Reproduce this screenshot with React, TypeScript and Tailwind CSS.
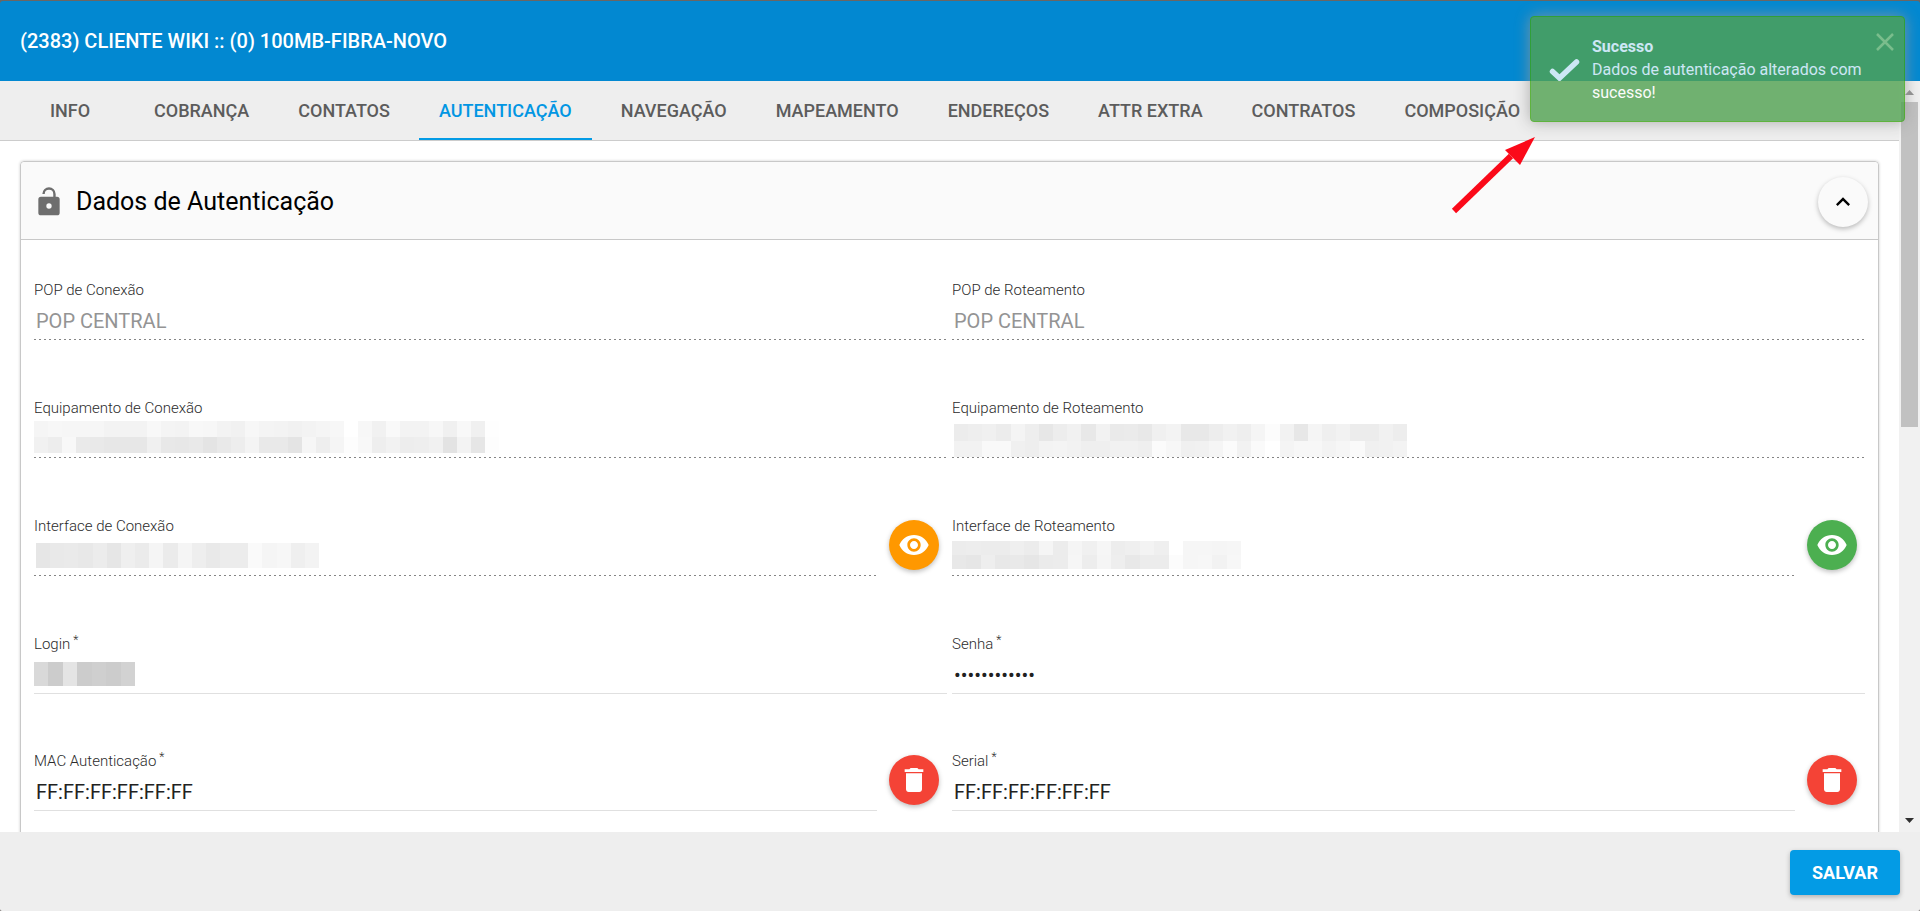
import { useState } from "react";
import type { ReactNode } from "react";
import { MdDelete, MdKeyboardArrowUp, MdRemoveRedEye } from "react-icons/md";

const tabs = [
  "INFO",
  "COBRANÇA",
  "CONTATOS",
  "AUTENTICAÇÃO",
  "NAVEGAÇÃO",
  "MAPEAMENTO",
  "ENDEREÇOS",
  "ATTR EXTRA",
  "CONTRATOS",
  "COMPOSIÇÃO",
];

/** Pixelated mask drawn over a redacted value; one shade list per row of blocks. */
function Mosaic({ rows, width, heights }: { rows: string[][]; width: number; heights: number[] }) {
  const cell = width / rows[0].length;
  const height = heights.reduce((a, b) => a + b, 0);
  let y = 0;
  return (
    <svg width={width} height={height} shapeRendering="crispEdges" aria-hidden="true">
      {rows.map((row, r) => {
        const top = y;
        y += heights[r];
        return row.map((shade, c) => {
          const x = Math.round(c * cell);
          return (
            <rect
              key={r + "-" + c}
              x={x}
              y={top}
              width={Math.round((c + 1) * cell) - x}
              height={heights[r]}
              fill={"#" + shade.repeat(3)}
            />
          );
        });
      })}
    </svg>
  );
}

function OpenLock() {
  return (
    <svg viewBox="0 0 24 24" className="size-8 text-[#6e6e6e]" fill="currentColor" aria-hidden="true">
      <path d="M12 17a2 2 0 0 0 2-2 2 2 0 0 0-2-2 2 2 0 0 0-2 2 2 2 0 0 0 2 2M18 8a2 2 0 0 1 2 2v10a2 2 0 0 1-2 2H6a2 2 0 0 1-2-2V10a2 2 0 0 1 2-2h9.200V6A3.200 3.200 0 0 0 12 2.900 3.200 3.200 0 0 0 8.800 6H7a5 5 0 0 1 5-5 5 5 0 0 1 5 5v2h1z" />
    </svg>
  );
}

const s = (text: string) => text.split(" ");

const masks = {
  equipConexao: [
    s("f5 f7 f6 f6 f6 f3 f3 f3 f8 f4 f3 f8 f7 f3 f1 f7 f4 f3 f1 f3 f5 f7 ff f7 f1 f9 f3 f3 f7 f0 f8 f0 fe"),
    s("f1 ed f8 ea e9 e7 e7 e7 f0 e8 e7 e9 e4 e9 ed f4 e9 e9 e4 f6 ee f5 fd f8 ee f2 ed ee f1 e3 f3 e6 fd"),
  ],
  equipRoteamento: [
    s("ec ee f0 ec f4 ee e7 ed f1 e8 f2 ea eb e8 f0 f3 e8 e8 ed f1 ee f5 fc f2 e7 f5 ef f2 ec ec f1 ed"),
    s("f2 f2 f9 f9 f0 ee f3 f4 f2 ef ef f1 f1 ef fb f7 f0 f1 f5 fb f2 fa ff f4 f7 f7 f3 f6 fa f0 f1 f3"),
  ],
  ifConexao: [s("e6 e9 ea e8 ec e6 ef eb f5 eb f5 ee e9 ec ec fa f5 f7 ef f3")],
  ifRoteamento: [
    s("ec ed ec ec ef ec f5 ec f5 f0 f6 ed ef f3 ef ff f6 f6 f5 f6"),
    s("e8 e6 ee e8 e9 e6 eb ec f6 ed f5 ee e8 ec ec fc f6 f7 f2 f7"),
  ],
  login: [s("d9 cc e4 cc cf cc d2")],
};

type FieldProps = {
  id: string;
  label: string;
  value?: string;
  type?: string;
  required?: boolean;
  disabled?: boolean;
  mask?: ReactNode;
  action?: ReactNode;
};

function Field({ id, label, value = "", type = "text", required, disabled, mask, action }: FieldProps) {
  const [text, setText] = useState(value);
  return (
    <div className={disabled ? "flex h-[118px] items-start" : "flex h-[117px] items-start"}>
      <div className="min-w-0 flex-1">
        <label htmlFor={id} className="block h-5 text-[15px] leading-5 font-light text-[#2b2b2b]">
          {label}
          {required && <sup className="top-[-5px] ml-[3px] text-[12px] leading-none">*</sup>}
        </label>
        <div
          className={
            disabled
              ? "relative h-10 bg-[repeating-linear-gradient(90deg,#858585_0_2px,transparent_2px_5px)] bg-[length:100%_1px] bg-bottom bg-no-repeat"
              : "relative h-10 border-b border-[#e0e0e0]"
          }
        >
          <input
            id={id}
            type={type}
            value={text}
            disabled={disabled}
            onChange={(e) => setText(e.target.value)}
            className="h-full w-full bg-transparent px-[2px] pt-[2px] text-[20px] text-[#212121] outline-none disabled:text-[#949494]"
          />
          {mask}
        </div>
      </div>
      {action}
    </div>
  );
}

function RoundButton({ label, color, children }: { label: string; color: string; children: ReactNode }) {
  return (
    <button
      type="button"
      aria-label={label}
      className={"mt-1 mr-2 ml-3 flex size-[50px] shrink-0 items-center justify-center rounded-full text-white shadow-[0_2px_5px_rgba(0,0,0,0.26)] " + color}
    >
      {children}
    </button>
  );
}

export default function App() {
  const [open, setOpen] = useState(true);
  const [toast, setToast] = useState(true);
  return (
    <div className="relative flex h-screen flex-col overflow-hidden bg-[#6b6663] pt-px font-[Roboto,sans-serif]">
      <header className="flex h-20 shrink-0 items-center rounded-t-[3px] bg-[#0288d1] px-5">
        <h1 className="text-[20px] font-medium text-white">(2383) CLIENTE WIKI :: (0) 100MB-FIBRA-NOVO</h1>
      </header>

      <div className="flex min-h-0 flex-1 bg-white">
        <main className="flex min-w-0 flex-1 flex-col">
          <nav className="flex h-[60px] shrink-0 gap-[9px] border-b border-[#ccc] bg-[#eee] pl-[15px]">
            {tabs.map((tab) => (
              <button
                key={tab}
                type="button"
                className={
                  tab === "AUTENTICAÇÃO"
                    ? "min-w-[110px] border-b-2 border-[#039be5] px-5 pt-[2px] text-[18px] font-medium whitespace-nowrap text-[#0296e3]"
                    : "min-w-[110px] border-b-2 border-transparent px-5 pt-[2px] text-[18px] font-medium whitespace-nowrap text-[#5c5c5c]"
                }
              >
                {tab}
              </button>
            ))}
          </nav>

          <div className="min-h-0 flex-1 overflow-hidden px-5 pt-5">
            <section className="rounded-t-[4px] border border-[#c8c8c8] shadow-[0_0_3px_rgba(0,0,0,0.2)]">
              <div className="flex h-[78px] items-center rounded-t-[4px] border-b border-[#c8c8c8] bg-[#fafafa] pt-[3px] pr-[10px] pl-3">
                <OpenLock />
                <h2 className="ml-[11px] flex-1 text-[25px] leading-8 text-black">Dados de Autenticação</h2>
                <button
                  type="button"
                  aria-label="Recolher"
                  onClick={() => setOpen(!open)}
                  className="flex size-[50px] items-center justify-center rounded-full bg-[#fafafa] text-black shadow-[0_2px_5px_rgba(0,0,0,0.26)]"
                >
                  <MdKeyboardArrowUp className="size-7" />
                </button>
              </div>
              {open && (
                <form className="grid grid-cols-2 gap-x-[5px] px-[13px] pt-10">
                  <Field id="pop-con" label="POP de Conexão" value="POP CENTRAL" disabled />
                  <Field id="pop-rot" label="POP de Roteamento" value="POP CENTRAL" disabled />
                  <Field
                    id="eq-con"
                    label="Equipamento de Conexão"
                    disabled
                    mask={<div className="absolute top-[3px] left-0"><Mosaic rows={masks.equipConexao} width={465} heights={[16, 16]} /></div>}
                  />
                  <Field
                    id="eq-rot"
                    label="Equipamento de Roteamento"
                    disabled
                    mask={<div className="absolute top-[6px] left-[2px]"><Mosaic rows={masks.equipRoteamento} width={453} heights={[17, 16]} /></div>}
                  />
                  <Field
                    id="if-con"
                    label="Interface de Conexão"
                    disabled
                    mask={<div className="absolute top-[7px] left-[2px]"><Mosaic rows={masks.ifConexao} width={283} heights={[25]} /></div>}
                    action={<RoundButton label="Ver interface de conexão" color="bg-[#ff9800]"><MdRemoveRedEye className="size-8" /></RoundButton>}
                  />
                  <Field
                    id="if-rot"
                    label="Interface de Roteamento"
                    disabled
                    mask={<div className="absolute top-[5px] left-0"><Mosaic rows={masks.ifRoteamento} width={289} heights={[14, 14]} /></div>}
                    action={<RoundButton label="Ver interface de roteamento" color="bg-[#4caf50]"><MdRemoveRedEye className="size-8" /></RoundButton>}
                  />
                  <Field
                    id="login"
                    label="Login"
                    required
                    mask={<div className="absolute top-2 left-0"><Mosaic rows={masks.login} width={101} heights={[24]} /></div>}
                  />
                  <Field id="senha" label="Senha" type="password" value="abcdefghijkl" required />
                  <Field
                    id="mac"
                    label="MAC Autenticação"
                    value="FF:FF:FF:FF:FF:FF"
                    required
                    action={<RoundButton label="Limpar MAC" color="bg-[#f44336]"><MdDelete className="size-8" /></RoundButton>}
                  />
                  <Field
                    id="serial"
                    label="Serial"
                    value="FF:FF:FF:FF:FF:FF"
                    required
                    action={<RoundButton label="Limpar serial" color="bg-[#f44336]"><MdDelete className="size-8" /></RoundButton>}
                  />
                </form>
              )}
            </section>
          </div>
        </main>

        <div aria-hidden="true" className="flex w-[21px] shrink-0 flex-col items-center bg-[#f1f1f1]">
          <svg viewBox="0 0 21 21" className="h-[21px] w-full shrink-0"><path d="M6 14h9l-4.500-5z" fill="#8f8f8f" /></svg>
          <div className="w-[17px] flex-[325] bg-[#c1c1c1]" />
          <div className="flex-[384]" />
          <svg viewBox="0 0 21 21" className="h-[21px] w-full shrink-0"><path d="M6 7h9l-4.500 5z" fill="#303030" /></svg>
        </div>
      </div>

      <footer className="flex h-[79px] shrink-0 items-center justify-end rounded-b-[2px] bg-[#eee] pt-px pr-5">
        <button type="button" className="h-[45px] w-[110px] rounded-[4px] bg-[#039be5] text-[18px] font-bold text-white shadow-[0_2px_5px_rgba(0,0,0,0.26)]">
          SALVAR
        </button>
      </footer>

      {toast && (
        <div
          role="status"
          className="absolute top-4 right-[15px] flex h-[106px] w-[375px] items-start rounded-[4px] border border-[#3ca513] bg-[#51a351] pl-[17px] text-white opacity-80 shadow-[0_0_15px_#999]"
        >
          <svg viewBox="0 0 32 24" className="mt-10 h-6 w-8" aria-hidden="true">
            <path d="M4.500 14.500l7 6.500L28.500 5" fill="none" stroke="currentColor" strokeWidth="5.500" strokeLinecap="round" />
          </svg>
          <div className="mt-[18px] ml-3 flex-1 pr-8 text-[16px] leading-[23px]">
            <strong className="block font-bold">Sucesso</strong>
            Dados de autenticação alterados com sucesso!
          </div>
          <button type="button" aria-label="Fechar" onClick={() => setToast(false)} className="absolute top-4 right-[10px] text-[#98cb7c]">
            <svg viewBox="0 0 18 18" className="size-[18px]"><path d="M1 1l16 16M17 1L1 17" stroke="currentColor" strokeWidth="2.500" /></svg>
          </button>
        </div>
      )}

      <svg viewBox="0 0 84 80" className="absolute top-[136px] left-[1451px] h-20 w-[84px]" aria-hidden="true">
        <path d="M3 75L60 20" stroke="#fb0919" strokeWidth="6" />
        <path d="M84 1L54 14L69 29z" fill="#fb0919" />
      </svg>
    </div>
  );
}
